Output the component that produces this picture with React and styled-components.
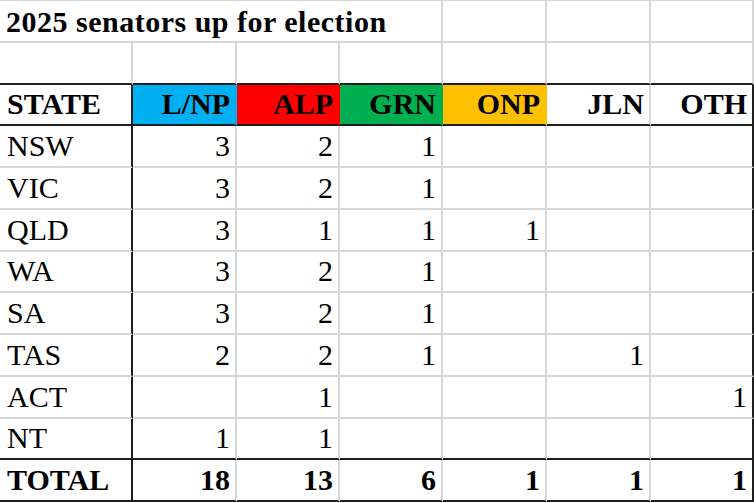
import React from 'react'
import styled, { createGlobalStyle } from 'styled-components'

const GlobalStyle = createGlobalStyle`
  html, body {
    margin: 0;
    padding: 0;
    background: #ffffff;
    overflow: hidden;
  }
`;

const grid = '#d6d6d6';
const dark = '#1e1e1e';

const parties = [
  { name: 'L/NP', fill: '#00b0f0' },
  { name: 'ALP', fill: '#ff0000' },
  { name: 'GRN', fill: '#00b050' },
  { name: 'ONP', fill: '#ffc000' },
  { name: 'JLN' },
  { name: 'OTH' },
];

const rows = [
  ['NSW', 3, 2, 1, '', '', ''],
  ['VIC', 3, 2, 1, '', '', ''],
  ['QLD', 3, 1, 1, 1, '', ''],
  ['WA', 3, 2, 1, '', '', ''],
  ['SA', 3, 2, 1, '', '', ''],
  ['TAS', 2, 2, 1, '', 1, ''],
  ['ACT', '', 1, '', '', '', 1],
  ['NT', 1, 1, '', '', '', ''],
];

const totals = ['TOTAL', 18, 13, 6, 1, 1, 1];

function Row({ cells, bold, darkBottom }) {
  return cells.map((value, i) => (
    <Cell
      key={i}
      $right={i > 0}
      $bold={bold}
      $darkRight={i === 0 || i === cells.length - 1}
      $darkBottom={darkBottom}
    >
      {value}
    </Cell>
  ));
}

function App() {
  return (
    <>
      <GlobalStyle />
      <Sheet>
        {/* title spills over four columns, like Excel overflow */}
        <Cell $span={4} $bold $title>2025 senators up for election</Cell>
        <Cell />
        <Cell />
        <Cell />

        {Array.from({ length: 7 }).map((_, i) => (
          <Cell key={'blank' + i} $darkBottom />
        ))}

        <Cell $bold $darkRight $darkBottom>STATE</Cell>
        {parties.map((p, i) => (
          <Cell
            key={p.name}
            $right
            $bold
            $fill={p.fill}
            $darkRight={i === parties.length - 1}
            $darkBottom
          >
            {p.name}
          </Cell>
        ))}

        {rows.map((r, i) => (
          <Row key={r[0]} cells={r} darkBottom={i === rows.length - 1} />
        ))}

        <Row cells={totals} bold darkBottom />
      </Sheet>
    </>
  )
}

const Sheet = styled.div`
  display: grid;
  grid-template-columns: 133px 104px 103px 103px 104px 104px 103px;
  grid-template-rows: repeat(12, 41.75px);
  width: 754px;
  border-top: 1px solid ${grid};
  font-family: "Liberation Serif", "Times New Roman", serif;
  font-size: 30px;
  color: #000000;
`;

const Cell = styled.div`
  box-sizing: border-box;
  grid-column: ${p => (p.$span ? `span ${p.$span}` : 'auto')};
  display: flex;
  align-items: center;
  justify-content: ${p => (p.$right ? 'flex-end' : 'flex-start')};
  padding: ${p => (p.$title ? '3px 0 0 6px' : p.$right ? '0 5px 0 0' : '0 0 0 7px')};
  background: ${p => p.$fill || '#ffffff'};
  font-weight: ${p => (p.$bold ? 700 : 400)};
  letter-spacing: ${p => (p.$title ? '0.5px' : 'normal')};
  white-space: nowrap;
  line-height: 1;
  border-right: 2px solid ${p => (p.$darkRight ? dark : p.$fill || grid)};
  border-bottom: 2px solid ${p => (p.$darkBottom ? dark : grid)};
`;

export default App
